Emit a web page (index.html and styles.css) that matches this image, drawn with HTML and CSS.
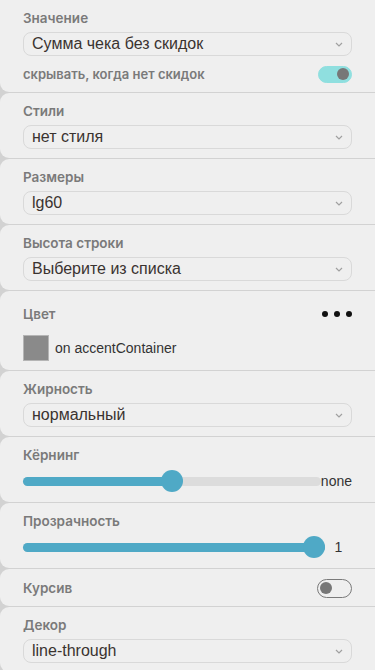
FILE: index.html
```html
<!DOCTYPE html>
<html lang="ru">
<head>
  <meta charset="UTF-8">
  <meta name="viewport" content="width=device-width, initial-scale=1.0">
  <title>Свойства текста</title>
  <link rel="stylesheet" href="styles.css">
</head>
<body>
  <div class="panel">
    <div class="section first">
      <div class="label">Значение</div>
      <div class="select"><span>Сумма чека без скидок</span><svg class="chevron" viewBox="0 0 8 5"><path d="M1 1l3 3 3-3"/></svg></div>
      <div class="row toggle-row">
        <div class="label small">скрывать, когда нет скидок</div>
        <div class="toggle on"><span class="knob"></span></div>
      </div>
    </div>

    <div class="section">
      <div class="label">Стили</div>
      <div class="select"><span>нет стиля</span><svg class="chevron" viewBox="0 0 8 5"><path d="M1 1l3 3 3-3"/></svg></div>
    </div>

    <div class="section">
      <div class="label">Размеры</div>
      <div class="select"><span>lg60</span><svg class="chevron" viewBox="0 0 8 5"><path d="M1 1l3 3 3-3"/></svg></div>
    </div>

    <div class="section">
      <div class="label">Высота строки</div>
      <div class="select"><span>Выберите из списка</span><svg class="chevron" viewBox="0 0 8 5"><path d="M1 1l3 3 3-3"/></svg></div>
    </div>

    <div class="section color">
      <div class="row color-head">
        <div class="label">Цвет</div>
        <div class="dots"><i></i><i></i><i></i></div>
      </div>
      <div class="row swatch-row">
        <span class="swatch"></span>
        <span class="text">on accentContainer</span>
      </div>
    </div>

    <div class="section">
      <div class="label">Жирность</div>
      <div class="select"><span>нормальный</span><svg class="chevron" viewBox="0 0 8 5"><path d="M1 1l3 3 3-3"/></svg></div>
    </div>

    <div class="section">
      <div class="label">Кёрнинг</div>
      <div class="row slider-row">
        <div class="slider"><div class="fill" style="width: 50%"><span class="thumb"></span></div></div>
        <span class="value">none</span>
      </div>
    </div>

    <div class="section">
      <div class="label">Прозрачность</div>
      <div class="row slider-row">
        <div class="slider"><div class="fill full" style="width: 100%"><span class="thumb"></span></div></div>
        <span class="value">1</span>
      </div>
    </div>

    <div class="section compact">
      <div class="row toggle-row">
        <div class="label">Курсив</div>
        <div class="toggle"><span class="knob"></span></div>
      </div>
    </div>

    <div class="section">
      <div class="label">Декор</div>
      <div class="select"><span>line-through</span><svg class="chevron" viewBox="0 0 8 5"><path d="M1 1l3 3 3-3"/></svg></div>
    </div>
  </div>
</body>
</html>
```

FILE: styles.css
```css
body {
  margin: 0;
  padding: 0;
  background-color: #d2d2d2;
  font-family: 'Liberation Sans', Arial, sans-serif;
  color: #333;
}

.panel {
  display: flex;
  flex-direction: column;
  gap: 1px;
}

.section {
  background-color: #efefef;
  padding: 10px 23px 9px 23px;
  border-radius: 9px 0 0 9px;
}

.section.first {
  border-top-left-radius: 0;
}

.label {
  font-family: Inter, 'Liberation Sans', sans-serif;
  font-size: 13.5px;
  font-weight: 600;
  line-height: 16px;
  color: #7a7a7a;
  margin-bottom: 6px;
}

.label.small {
  font-size: 13px;
}

.row {
  display: flex;
  align-items: center;
}

.row .label {
  margin-bottom: 0;
  flex: 1;
}

.select {
  height: 24px;
  box-sizing: border-box;
  border: 1px solid #d9d9d9;
  border-radius: 8px;
  display: flex;
  align-items: center;
  padding: 0 8px 0 8px;
  font-size: 16px;
  color: #3a3330;
}

.select span {
  flex: 1;
}

.chevron {
  width: 8px;
  height: 5px;
  fill: none;
  stroke: #a0a0a0;
  stroke-width: 1.2;
}

.toggle-row {
  height: 18px;
  margin-top: 9px;
}

.compact {
  padding-top: 9px;
  padding-bottom: 8px;
}

.compact .toggle-row {
  margin-top: 0;
  height: 20px;
}

.toggle {
  width: 35px;
  height: 19px;
  box-sizing: border-box;
  border: 1.5px solid #7a7a7a;
  border-radius: 10px;
  display: flex;
  align-items: center;
  padding: 0 2px;
}

.toggle.on {
  width: 34px;
  height: 17px;
  background-color: #8fdfdf;
  border-color: #8fdfdf;
  justify-content: flex-end;
}

.knob {
  width: 12px;
  height: 12px;
  border-radius: 50%;
  background-color: #777;
}

.section.color {
  padding-top: 14px;
}

.color-head {
  height: 18px;
}

.dots {
  display: flex;
  gap: 6px;
}

.dots i {
  width: 6px;
  height: 6px;
  border-radius: 50%;
  background-color: #111;
}

.swatch-row {
  margin-top: 12px;
  gap: 6px;
}

.swatch {
  width: 26px;
  height: 26px;
  box-sizing: border-box;
  background-color: #8a8a8a;
  border: 1px solid #b5b5b5;
}

.text {
  font-size: 14px;
  color: #333;
}

.slider-row {
  height: 24px;
}

.slider {
  flex: 1;
  height: 9px;
  border-radius: 5px;
  background-color: #dcdcdc;
  display: flex;
}

.fill {
  height: 100%;
  border-radius: 5px;
  background-color: #4fa9c6;
  position: relative;
}

.thumb {
  position: absolute;
  right: -11px;
  top: 50%;
  margin-top: -11px;
  width: 22px;
  height: 22px;
  border-radius: 50%;
  background-color: #4fa9c6;
}

.fill.full .thumb {
  right: 0;
}

.value {
  min-width: 27px;
  text-align: center;
  font-size: 14px;
  color: #333;
}
```
